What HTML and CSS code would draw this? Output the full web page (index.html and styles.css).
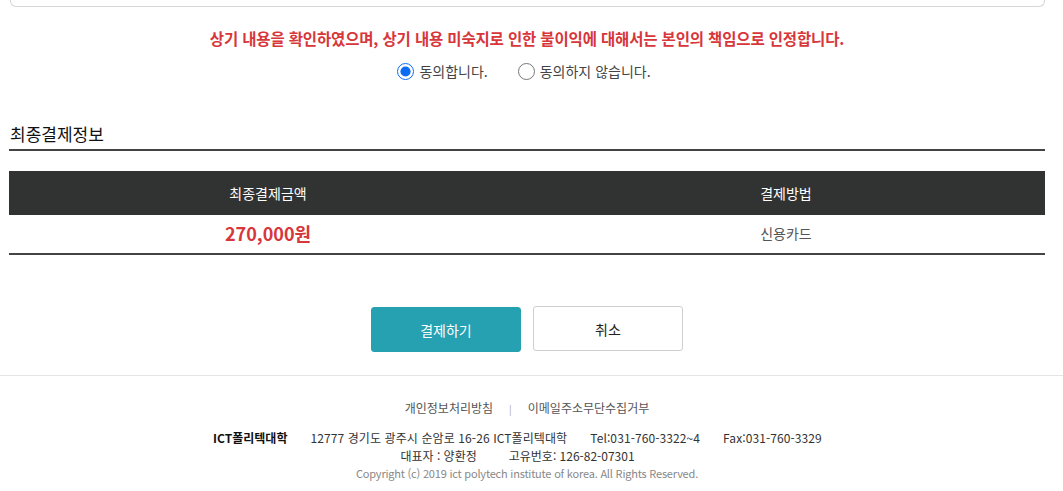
FILE: index.html
```html
<!DOCTYPE html>
<html lang="ko">
<head>
<meta charset="utf-8">
<title>결제</title>
<link rel="stylesheet" href="styles.css">
</head>
<body>
<div class="page">
  <div class="content">
    <div class="prev-box"></div>
    <p class="notice">상기 내용을 확인하였으며, 상기 내용 미숙지로 인한 불이익에 대해서는 본인의 책임으로 인정합니다.</p>
    <div class="agree">
      <label class="radio"><input type="radio" name="agree" checked> <span>동의합니다.</span></label>
      <label class="radio"><input type="radio" name="agree"> <span>동의하지 않습니다.</span></label>
    </div>
    <h2 class="sec-title">최종결제정보</h2>
    <table class="pay-table">
      <thead>
        <tr><th>최종결제금액</th><th>결제방법</th></tr>
      </thead>
      <tbody>
        <tr><td class="amount">270,000원</td><td class="method">신용카드</td></tr>
      </tbody>
    </table>
    <div class="btns">
      <button class="btn btn-pay">결제하기</button>
      <button class="btn btn-cancel">취소</button>
    </div>
  </div>
  <footer class="footer">
    <div class="links"><a>개인정보처리방침</a><span class="sep">|</span><a>이메일주소무단수집거부</a></div>
    <div class="addr">
      <strong>ICT폴리텍대학</strong><span>12777 경기도 광주시 순암로 16-26 ICT폴리텍대학</span><span>Tel:031-760-3322~4</span><span>Fax:031-760-3329</span>
    </div>
    <div class="addr2"><span>대표자 : 양환정</span><span>고유번호: 126-82-07301</span></div>
    <div class="copy">Copyright (c) 2019 ict polytech institute of korea. All Rights Reserved.</div>
  </footer>
</div>
</body>
</html>
```

FILE: styles.css
```css
* { box-sizing: border-box; }
html, body { margin: 0; padding: 0; background: #fff; }
body {
  font-family: "Noto Sans CJK KR", "Noto Sans", sans-serif;
  color: #333;
  font-size: 13px;
}
.page { width: 1054px; }
.content { padding: 0 9px; }
.prev-box {
  margin: -10px 0 0 1px;
  border: 1px solid #d6d6d6;
  border-radius: 0 0 6px 6px;
  border-top: 0;
  height: 17px;
}
.notice {
  margin: 21px 0 0;
  text-align: center;
  color: #d7363b;
  font-weight: bold;
  font-size: 15.5px;
  line-height: 20px;
  letter-spacing: -0.15px;
}
.agree {
  display: flex;
  justify-content: center;
  gap: 30px;
  margin-top: 11px;
  padding-right: 6px;
  height: 24px;
  align-items: center;
}
.radio {
  display: flex;
  align-items: center;
  gap: 5px;
  font-size: 14px;
  color: #444;
}
.radio input {
  margin: 0;
  width: 17px;
  height: 17px;
  accent-color: #0a6cf5;
}
.sec-title {
  margin: 39px 0 0;
  padding: 0 0 3px 1px;
  font-size: 17px;
  font-weight: normal;
  color: #111;
  line-height: 24px;
  border-bottom: 2px solid #444;
}
.pay-table {
  width: 100%;
  margin-top: 20px;
  border-collapse: collapse;
  table-layout: fixed;
}
.pay-table th {
  background: #313333;
  color: #fff;
  font-weight: normal;
  font-size: 14px;
  height: 44px;
  padding: 0;
}
.pay-table td {
  height: 39px;
  text-align: center;
  padding: 0 0 2px;
  border-bottom: 2px solid #444;
}
.pay-table .amount {
  color: #d7363b;
  font-weight: bold;
  font-size: 18px;
}
.pay-table .method {
  color: #555;
  font-size: 14px;
}
.btns {
  display: flex;
  justify-content: center;
  gap: 12px;
  margin-top: 51px;
}
.btn {
  width: 150px;
  height: 45px;
  border-radius: 3px;
  font-family: inherit;
  font-size: 14px;
  cursor: pointer;
}
.btn-pay {
  background: #26a1b2;
  border: 1px solid #26a1b2;
  color: #fff;
  margin-top: 1px;
}
.btn-cancel {
  background: #fff;
  border: 1px solid #cfcfcf;
  color: #222;
}
.footer {
  margin-top: 23px;
  border-top: 1px solid #e5e5e5;
  text-align: center;
  padding-top: 22px;
  font-size: 12px;
  color: #444;
  width: 1063px;
}
.footer .links { width: 1054px; color: #555; line-height: 20px; }
.footer .links .sep { margin: 0 16px; color: #aaa; font-size: 10px; }
.addr {
  width: 1035px;
  margin-top: 10px;
  display: flex;
  justify-content: center;
  gap: 23px;
  line-height: 18px;
  color: #333;
}
.addr strong { color: #111; margin-right: 0; }
.addr span { letter-spacing: 0.1px; }
.addr2 {
  width: 1035px;
  display: flex;
  justify-content: center;
  gap: 32px;
  line-height: 18px;
  color: #333;
}
.copy {
  width: 1054px;
  font-size: 11px;
  color: #888;
  line-height: 16px;
  letter-spacing: -0.2px;
}
```
